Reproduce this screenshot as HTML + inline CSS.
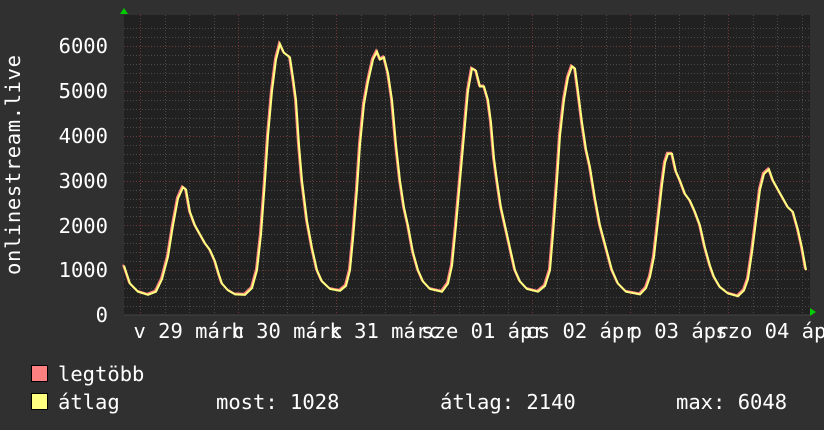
<!DOCTYPE html>
<html><head><meta charset="utf-8"><style>
html,body{margin:0;padding:0;background:#303030;}
svg{display:block;}
text{font-family:"DejaVu Sans Mono","Liberation Mono",monospace;fill:#fff;font-size:20.5px;}
</style></head><body>
<svg width="824" height="430" viewBox="0 0 824 430" xmlns="http://www.w3.org/2000/svg">
<rect width="824" height="430" fill="#303030"/>
<rect x="124" y="15" width="686" height="300" fill="#212121"/>
<g id="grid"></g>
<path d="M120 14 L124 8 L128 14 Z" fill="#00cc00"/>
<path d="M810 308 L816 312 L810 316 Z" fill="#00cc00"/>
<line x1="124" y1="315" x2="810" y2="315" stroke="#444" stroke-width="1"/>
<g id="data"></g>
<g text-anchor="end">
<text x="108" y="53">6000</text>
<text x="108" y="98">5000</text>
<text x="108" y="143">4000</text>
<text x="108" y="188">3000</text>
<text x="108" y="233">2000</text>
<text x="108" y="277">1000</text>
<text x="108" y="322">0</text>
</g>
<text transform="translate(20,165) rotate(-90)" text-anchor="middle" textLength="220">onlinestream.live</text>
<g text-anchor="middle">
<text x="189" y="338">v 29 márc</text>
<text x="287" y="338">h 30 márc</text>
<text x="385" y="338">k 31 márc</text>
<text x="483" y="338">sze 01 ápr</text>
<text x="581" y="338">cs 02 ápr</text>
<text x="679" y="338">p 03 ápr</text>
<text x="777" y="338">szo 04 ápr</text>
</g>
<rect x="31.5" y="365.5" width="16" height="16" fill="#ff8080" stroke="#000"/>
<rect x="31.5" y="393.5" width="16" height="16" fill="#ffff80" stroke="#000"/>
<text x="58" y="381">legtöbb</text>
<text x="58" y="409">átlag</text>
<text x="216" y="409">most: 1028</text>
<text x="440" y="409">átlag: 2140</text>
<text x="676" y="409">max: 6048</text>
</svg>
<script>
var ns="http://www.w3.org/2000/svg",g=document.getElementById('grid');
function ln(x1,y1,x2,y2,c){var l=document.createElementNS(ns,'line');l.setAttribute('x1',x1);l.setAttribute('y1',y1);l.setAttribute('x2',x2);l.setAttribute('y2',y2);l.setAttribute('stroke',c);l.setAttribute('stroke-dasharray','1,2');g.appendChild(l);}
for(var v=200;v<=6400;v+=200){var y=Math.round(315-v*0.0448)+0.5;if(y<15)break;ln(124,y,810,y,v%1000==0?'#703838':'#4a4a4a');}
for(var x=140;x<810;x+=24.5){var xi=Math.round(x)+0.5;var major=Math.abs(((x-140)/98)-Math.round((x-140)/98))<0.01;ln(xi,15,xi,315,major?'#703838':'#4a4a4a');}
for(var x=140-24.5;x>124;x-=24.5){ln(Math.round(x)+0.5,15,Math.round(x)+0.5,315,'#4a4a4a');}
var pts=[[124,1100],[130,700],[138,520],[148,450],[156,520],[162,800],[168,1300],[173,2000],[178,2600],[183,2850],[186,2800],[190,2300],[195,2000],[200,1800],[205,1600],[210,1450],[215,1200],[219,900],[222,700],[228,550],[235,460],[245,450],[252,600],[257,1000],[261,1800],[265,3000],[268,4000],[272,5000],[276,5700],[280,6048],[284,5850],[290,5750],[293,5300],[296,4800],[299,3800],[302,3000],[307,2100],[312,1500],[317,1000],[322,750],[330,580],[340,540],[346,650],[350,1000],[353,1700],[357,2800],[360,3800],[364,4700],[368,5200],[373,5700],[377,5880],[380,5700],[384,5750],[388,5400],[392,4800],[396,3800],[400,3000],[404,2400],[408,2000],[413,1400],[418,1000],[423,750],[430,580],[442,520],[448,700],[452,1100],[456,2000],[460,3000],[464,4000],[468,5000],[472,5500],[476,5450],[480,5100],[484,5100],[488,4800],[491,4300],[494,3500],[497,3000],[501,2400],[505,2000],[510,1500],[515,1000],[520,750],[527,580],[538,520],[545,650],[550,1000],[553,1800],[557,3000],[560,4000],[564,4800],[568,5300],[572,5550],[575,5500],[578,5000],[582,4300],[586,3700],[590,3300],[595,2600],[600,2000],[606,1500],[612,1000],[618,700],[626,520],[640,460],[646,600],[650,850],[654,1300],[658,2100],[662,2900],[665,3400],[668,3600],[672,3600],[676,3200],[680,3000],[685,2700],[690,2550],[695,2300],[700,2000],[705,1500],[710,1100],[714,850],[720,620],[728,480],[738,420],[744,550],[748,800],[752,1400],[756,2100],[760,2800],[764,3150],[769,3250],[773,3000],[778,2800],[783,2600],[788,2400],[793,2300],[798,1900],[802,1500],[806,1000]];
var d=document.getElementById('data');
function pl(dx,dy,c){var p=document.createElementNS(ns,'polyline');p.setAttribute('points',pts.map(function(q){return (q[0]+dx)+','+(315-q[1]*0.0448+dy).toFixed(1)}).join(' '));p.setAttribute('fill','none');p.setAttribute('stroke',c);p.setAttribute('stroke-width','2');p.setAttribute('stroke-linejoin','miter');d.appendChild(p);}
pl(-1,-1,'#ff8080');pl(0,0,'#ffff80');
</script>
</body></html>
